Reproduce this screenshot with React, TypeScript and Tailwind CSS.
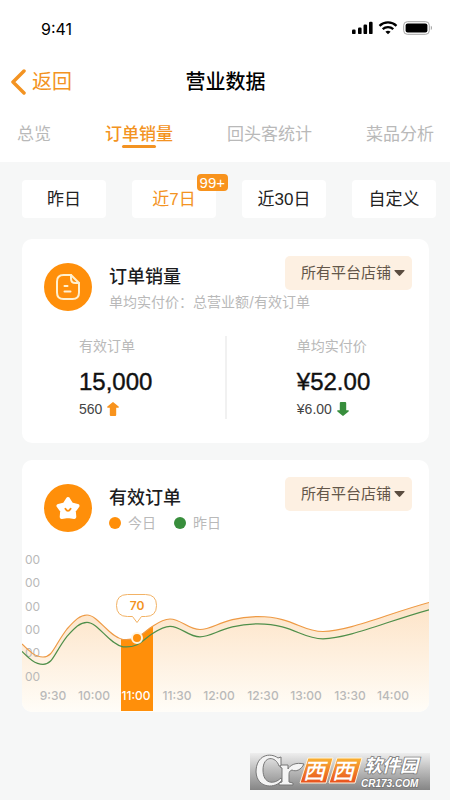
import { useState } from 'react'
import type { ReactNode } from 'react'

const TABS = ['总览', '订单销量', '回头客统计', '菜品分析']

const RANGES = [
  { label: '昨日' },
  { label: '近7日', badge: '99+' },
  { label: '近30日' },
  { label: '自定义' },
]

const TIMES = [
  { label: '9:30', x: 31 },
  { label: '10:00', x: 72 },
  { label: '11:00', x: 114 },
  { label: '11:30', x: 155 },
  { label: '12:00', x: 197 },
  { label: '12:30', x: 241 },
  { label: '13:00', x: 284 },
  { label: '13:30', x: 328 },
  { label: '14:00', x: 371 },
]

const Y_LABELS = [20, 43, 67, 90, 113, 137]

const CURVE =
  'M0 104 C7 111 13 117 21 117 C31 117 32 106 45 89 C53 80 58 75 65 75 C76 75 87 97 101 99.5 C117 101 121 92 131 86 C137 82 142 79 148 79 C159 79 166 89.500 178 89.500 C192 89.500 201 77 236 76.500 C272 77 279 91.500 301 91.500 C327 91 365 74 407 62.500'

export default function App() {
  const [tab, setTab] = useState('订单销量')
  const [range, setRange] = useState('近7日')

  return (
    <main className="flex min-h-screen flex-col bg-[#f6f7f7] font-['Inter','Noto_Sans_CJK_SC',sans-serif] text-[#1c1c1e]">
      <header className="bg-white pb-[14px]">
        <StatusBar />

        <div className="mt-[21px] grid h-10 grid-cols-3 items-center pr-[10px] pl-[11px]">
          <button className="flex items-center gap-[6px] text-[20px] leading-7 text-[#f39322]">
            <svg className="h-[26px] w-[15px]" viewBox="0 0 15 26" fill="none" stroke="currentColor">
              <path d="M13 2 2 13l11 11" strokeWidth="3.500" strokeLinecap="round" strokeLinejoin="round" />
            </svg>
            返回
          </button>
          <h1 className="text-center text-[20px] leading-7 font-medium text-black">营业数据</h1>
        </div>

        <nav className="mt-[22px] flex items-start justify-between pr-4 pl-[17px]">
          {TABS.map((name) => (
            <button
              key={name}
              onClick={() => setTab(name)}
              className={`flex flex-col items-center text-[17px] leading-5 ${
                tab === name ? 'font-medium text-[#f39322]' : 'text-[#b9b9b9]'
              }`}
            >
              {name}
              {tab === name && <span className="mt-px h-[3px] w-[34px] rounded-full bg-[#f39322]" />}
            </button>
          ))}
        </nav>
      </header>

      <div className="mt-[18px] flex justify-between pr-[14px] pl-[22px] font-['Liberation_Sans','Noto_Sans_CJK_SC',sans-serif]">
        {RANGES.map(({ label, badge }) => (
          <button
            key={label}
            onClick={() => setRange(label)}
            className={`relative h-[38px] w-[84px] rounded-[4px] bg-white pt-[2px] text-[17px] ${
              range === label ? 'text-[#f39322]' : 'text-[#222]'
            }`}
          >
            {label}
            {badge && (
              <span className="absolute -top-[6px] -right-[12px] rounded-[4px] bg-[#f8931d] px-[3px] text-[15px] leading-[17px] text-white">
                {badge}
              </span>
            )}
          </button>
        ))}
      </div>

      <div className="mt-[21px] flex flex-col gap-[17px] pr-[21px] pl-[22px]">
        {/* Order summary */}
        <section className="rounded-[10px] bg-white pt-[17px] pb-6">
          <CardHeader
            title="订单销量"
            icon={<DocIcon />}
            sub={<p className="text-[14px] leading-6 text-[#b9b9b9]">单均实付价：总营业额/有效订单</p>}
          />
          <div className="mt-[22px] grid grid-cols-[5fr_7fr] pl-[57px]">
            <Stat label="有效订单" value="15,000" delta="560" up />
            <div className="border-l-2 border-[#f1f1f1] pl-[70px]">
              <Stat label="单均实付价" value="¥52.00" delta="¥6.00" />
            </div>
          </div>
        </section>

        {/* Trend chart */}
        <section className="overflow-hidden rounded-[10px] bg-white pt-[17px]">
          <CardHeader
            title="有效订单"
            icon={<StarIcon />}
            sub={
              <div className="flex gap-[18px] text-[14px] leading-6 text-[#b9b9b9]">
                <span className="flex items-center gap-[7px]">
                  <i className="size-3 rounded-full bg-[#ff8f0a]" />
                  今日
                </span>
                <span className="flex items-center gap-[7px]">
                  <i className="size-3 rounded-full bg-[#388e3c]" />
                  昨日
                </span>
              </div>
            }
          />
          <TrendChart />
        </section>
      </div>

      <Watermark />
    </main>
  )
}

function StatusBar() {
  return (
    <div className="flex items-center justify-between pt-[17px] pr-[17px] pl-[41px]">
      <span className="text-[16px] leading-6 text-black">9:41</span>
      <svg className="h-4 w-[82px]" viewBox="0 0 82 16">
        <rect x="1" y="8.500" width="3.600" height="4.600" rx="1.200" />
        <rect x="7" y="6.500" width="3.600" height="6.600" rx="1.200" />
        <rect x="12.500" y="3.500" width="3.600" height="9.600" rx="1.200" />
        <rect x="18" y="0.700" width="3.600" height="12.400" rx="1.200" />
        <g fill="none" stroke="#000" strokeWidth="2.300">
          <path d="M28.500 4.800a12.500 12.500 0 0 1 17 0" />
          <path d="M31.700 8.200a8 8 0 0 1 10.600 0" />
        </g>
        <path d="M34.400 10.800a4 4 0 0 1 5.200 0L37 13.300z" />
        <rect x="52.700" y="0.700" width="25.600" height="12.600" rx="3.600" fill="none" stroke="#a6a6a6" />
        <rect x="54.600" y="2.500" width="21.800" height="9" rx="2" />
        <path d="M79.800 4.800v4.200c1.600-.5 1.600-3.700 0-4.200z" fill="#a6a6a6" />
      </svg>
    </div>
  )
}

function CardHeader({ title, icon, sub }: { title: string; icon: ReactNode; sub: ReactNode }) {
  return (
    <div className="grid grid-cols-[48px_1fr_auto] gap-x-[17px] pr-[17px] pl-[22px]">
      <div className="row-span-2 mt-[7px] flex size-12 items-center justify-center rounded-full bg-[#ff8f0a]">
        {icon}
      </div>
      <h2 className="self-end text-[18px] leading-[26px] font-medium">{title}</h2>
      <div className="grid h-[34px] items-center">
        <select
          aria-label={`${title}店铺`}
          className="col-start-1 row-start-1 h-full appearance-none rounded-[5px] bg-[#fdf0e2] pt-px pr-5 pl-4 text-[15px] text-[#635649]"
        >
          <option>所有平台店铺</option>
        </select>
        <svg
          className="pointer-events-none col-start-1 row-start-1 mr-[7px] h-[6px] w-[11px] justify-self-end"
          viewBox="0 0 11 6"
          fill="#5a4c3f"
        >
          <path d="M1 0h9q1 0 .4.900L6.200 5.600q-.7.600-1.400 0L.6.900Q0 0 1 0z" />
        </svg>
      </div>
      <div className="col-span-2">{sub}</div>
    </div>
  )
}

function Stat({ label, value, delta, up }: { label: string; value: string; delta: string; up?: boolean }) {
  return (
    <div>
      <p className="text-[14px] leading-5 text-[#b9b9b9]">{label}</p>
      <p className="mt-[10px] font-['Liberation_Sans',sans-serif] text-[24px] leading-8 text-[#111] [-webkit-text-stroke:0.4px]">
        {value}
      </p>
      <p className="mt-px flex items-center gap-[5px] font-['Liberation_Sans',sans-serif] text-[14px] leading-5 text-[#444]">
        {delta}
        <svg className={`h-[14px] w-3 ${up ? 'text-[#f8931d]' : 'rotate-180 text-[#388e3c]'}`} viewBox="0 0 12 14" fill="currentColor">
          <path d="M5.300.4q.7-.6 1.400 0l4.900 4.200q.7 1-.4 1.200H9.200V13q0 1-1 1H3.800q-1 0-1-1V5.800H.8Q-.3 5.600.4 4.600z" />
        </svg>
      </p>
    </div>
  )
}

function DocIcon() {
  return (
    <svg className="h-[26px] w-6" viewBox="0 0 24 26" fill="none" stroke="#fff0cf" strokeWidth="2" strokeLinecap="round" strokeLinejoin="round">
      <path d="M15 1H7.500Q1 1 1 7.500v11Q1 25 7.500 25h9Q23 25 23 18.500V9z" />
      <path d="M15 1v3.500Q15 9 19.500 9H23" />
      <path d="M8.500 12h3M8.500 17.500h6" />
    </svg>
  )
}

function StarIcon() {
  return (
    <svg className="h-6 w-[26px]" viewBox="0 0 26 24">
      <path
        d="M13 3 16.500 8.500l6 1.400-3.700 5 .5 6L13 20l-6.300.9.500-6-3.700-5 6-1.400z"
        fill="#fff"
        stroke="#fff"
        strokeWidth="4"
        strokeLinejoin="round"
      />
      <path d="M10.400 12.800q2.600 4.200 5.200 0" fill="none" stroke="#ff8f0a" strokeWidth="1.800" strokeLinecap="round" />
    </svg>
  )
}

function TrendChart() {
  return (
    <svg className="mt-[5px] block w-full" viewBox="0 0 407 172" role="img" aria-label="有效订单">
      <defs>
        <linearGradient id="area" gradientUnits="userSpaceOnUse" x1="0" y1="62" x2="0" y2="172">
          <stop offset="0" stopColor="#fde3c6" />
          <stop offset="1" stopColor="#fffdf8" />
        </linearGradient>
        <clipPath id="under">
          <path d={`${CURVE} V172 H0 Z`} />
        </clipPath>
      </defs>

      <path d={`${CURVE} V172 H0 Z`} fill="url(#area)" />

      <g fill="#b9b9b9" fontSize="12">
        {Y_LABELS.map((y) => (
          <text key={y} x="3" y={y + 4}>
            00
          </text>
        ))}
      </g>

      <rect x="99" y="60" width="32" height="111" fill="#ff8f0a" clipPath="url(#under)" />
      <path d={CURVE} fill="none" stroke="#ee9a45" strokeWidth="1.200" />
      <g transform="translate(0 7.300)">
        <path d={CURVE} fill="none" stroke="#4f8f4a" strokeWidth="1.200" />
      </g>

      <g fontSize="12" fontWeight="500" textAnchor="middle">
        {TIMES.map(({ label, x }) => (
          <text key={label} x={x} y="160" fill={label === '11:00' ? '#fff' : '#b9b9b9'}>
            {label}
          </text>
        ))}
      </g>

      <circle cx="115" cy="98" r="5" fill="#ff8f0a" stroke="#fff4e0" strokeWidth="2" />

      <path
        d="M105.500 54.500h18q11 0 11 11t-11 11h-4l-4.500 6-4.500-6h-5q-11 0-11-11t11-11z"
        fill="#fff"
        stroke="#f2b265"
      />
      <text x="115" y="70" fontSize="12" fontWeight="600" textAnchor="middle" fill="#f39322">
        70
      </text>
    </svg>
  )
}

function Watermark() {
  return (
    <svg className="mt-[41px] mr-5 h-[37px] w-[180px] self-end" viewBox="0 0 180 37" role="img" aria-label="西西软件园">
      <defs>
        <linearGradient id="plate" x1="0" y1="0" x2="0" y2="1">
          <stop offset="0" stopColor="#eeeeee" />
          <stop offset="0.450" stopColor="#bdbdbd" />
          <stop offset="1" stopColor="#858585" />
        </linearGradient>
        <linearGradient id="tile" x1="0" y1="0" x2="0" y2="1">
          <stop offset="0" stopColor="#f9b233" />
          <stop offset="1" stopColor="#e8501e" />
        </linearGradient>
      </defs>
      <rect width="180" height="37" fill="url(#plate)" />

      {/* Emblem with its leaf */}
      <g fill="#f4f4f4" stroke="#777" strokeLinejoin="round">
        <path d="M31 4v9h-2C26 3 13 2 13 17c0 14 11 15 18 8l1 2C26 36 7 36 6 19 6 2 20-1 28 5z" />
        <path d="M31 12h7v4c2-4 8-7 16-5-3 6-8 8-12 6-3 1-3 3-3 5v7l4 1v2H29v-2l3-1V15l-2-1z" />
      </g>

      <path d="M58 5h25l-7 25H50z" fill="url(#tile)" stroke="#fff3dc" />
      <path d="M87 5h25l-7 25H79z" fill="url(#tile)" stroke="#fff3dc" />
      <g fill="#fff" fontSize="22" fontWeight="500" fontStyle="italic">
        <text x="53" y="26">西</text>
        <text x="82" y="26">西</text>
      </g>
      <g fill="#fff" stroke="#777" strokeWidth="1.500" paintOrder="stroke" fontStyle="italic">
        <text x="114" y="19" fontSize="18" fontWeight="700">
          软件园
        </text>
        <text x="111" y="34" fontSize="10" fontWeight="700" fontFamily="Liberation Sans">
          CR173.COM
        </text>
      </g>
    </svg>
  )
}
